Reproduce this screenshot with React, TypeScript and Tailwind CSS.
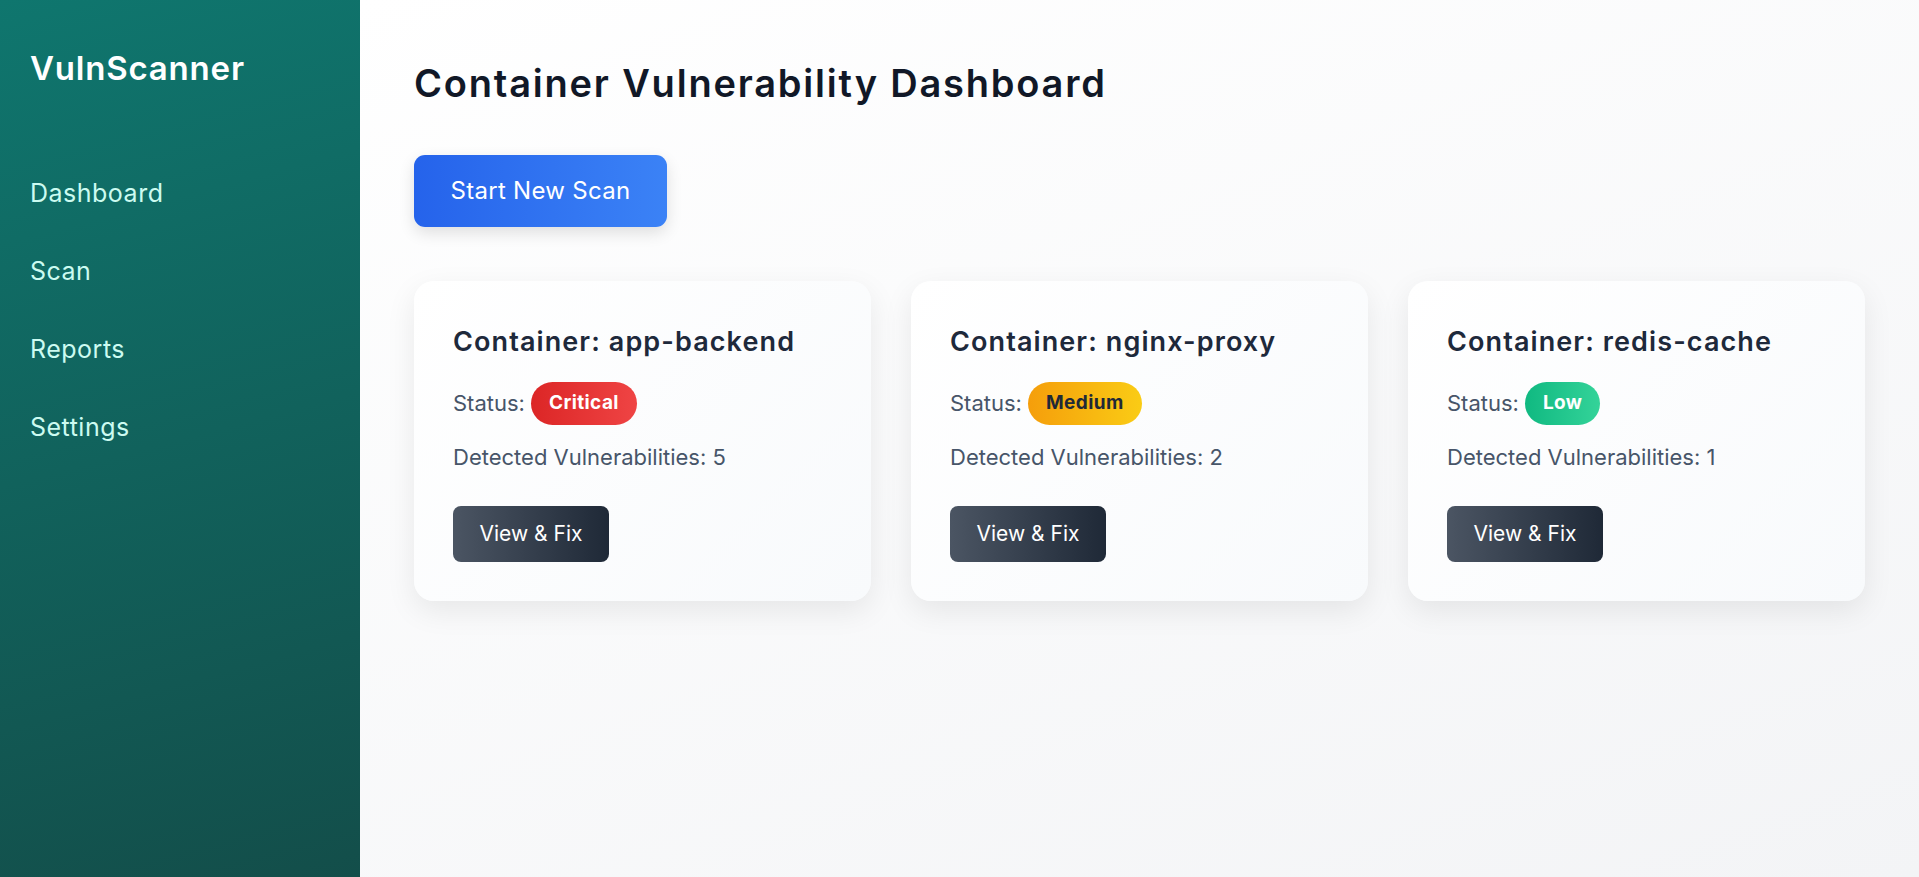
import React from "react";

const font = { fontFamily: "Inter, 'Noto Sans', sans-serif" };

type Card = {
  name: string;
  status: string;
  count: number;
  badge: string;
};

const cards: Card[] = [
  {
    name: "app-backend",
    status: "Critical",
    count: 5,
    badge: "bg-[linear-gradient(90deg,#dc2626,#ef4444)] text-white",
  },
  {
    name: "nginx-proxy",
    status: "Medium",
    count: 2,
    badge: "bg-[linear-gradient(90deg,#f59e0b,#facc15)] text-[#1f2937]",
  },
  {
    name: "redis-cache",
    status: "Low",
    count: 1,
    badge: "bg-[linear-gradient(90deg,#10b981,#34d399)] text-white",
  },
];

export default function App() {
  return (
    <div className="flex h-[877px] w-full overflow-hidden" style={font}>
      <aside className="w-[360px] shrink-0 bg-[linear-gradient(165deg,#0f766e,#134e4a)] px-[30px] pt-[49px]">
        <div className="text-[33px] font-semibold leading-[38px] tracking-[0.8px] text-white">
          VulnScanner
        </div>
        <nav className="mt-[89px] flex flex-col gap-[44px]">
          {["Dashboard", "Scan", "Reports", "Settings"].map((n) => (
            <div key={n} className="text-[25px] leading-[34px] tracking-[0.5px] text-[#ccfbf1]">
              {n}
            </div>
          ))}
        </nav>
      </aside>
      <main className="flex-1 bg-[linear-gradient(160deg,#ffffff,#f3f4f6)] px-[54px] pt-[60px]">
        <h1 className="text-[38px] font-semibold leading-[46px] tracking-[1.8px] text-[#111827]">
          Container Vulnerability Dashboard
        </h1>
        <button className="mt-[49px] h-[72px] w-[253px] rounded-[11px] bg-[linear-gradient(90deg,#2563eb,#3b82f6)] text-[24px] tracking-[0.3px] text-white shadow-[0_6px_16px_rgba(0,0,0,0.12)]">
          Start New Scan
        </button>
        <div className="mt-[54px] grid grid-cols-3 gap-[40px]">
          {cards.map((c) => (
            <div
              key={c.name}
              className="h-[320px] rounded-[20px] bg-[linear-gradient(135deg,#ffffff,#f8fafc)] px-[39px] pt-[42px] shadow-[0_10px_30px_rgba(0,0,0,0.08)]"
            >
              <div className="text-[27px] font-semibold leading-[38px] tracking-[1.1px] text-[#1e293b]">
                Container: {c.name}
              </div>
              <div className="mt-[21px] flex h-[43px] items-center text-[22px] text-[#475569]">
                <span>Status:</span>
                <span
                  className={`ml-[6px] flex h-[43px] items-center rounded-full px-[18px] text-[19px] font-bold tracking-[0.4px] ${c.badge}`}
                >
                  {c.status}
                </span>
              </div>
              <div className="mt-[16px] text-[22px] leading-[32px] text-[#475569]">
                Detected Vulnerabilities: {c.count}
              </div>
              <button className="mt-[33px] h-[56px] w-[156px] rounded-[8px] bg-[linear-gradient(90deg,#4b5563,#1f2937)] text-[21px] text-white">
                View &amp; Fix
              </button>
            </div>
          ))}
        </div>
      </main>
    </div>
  );
}
